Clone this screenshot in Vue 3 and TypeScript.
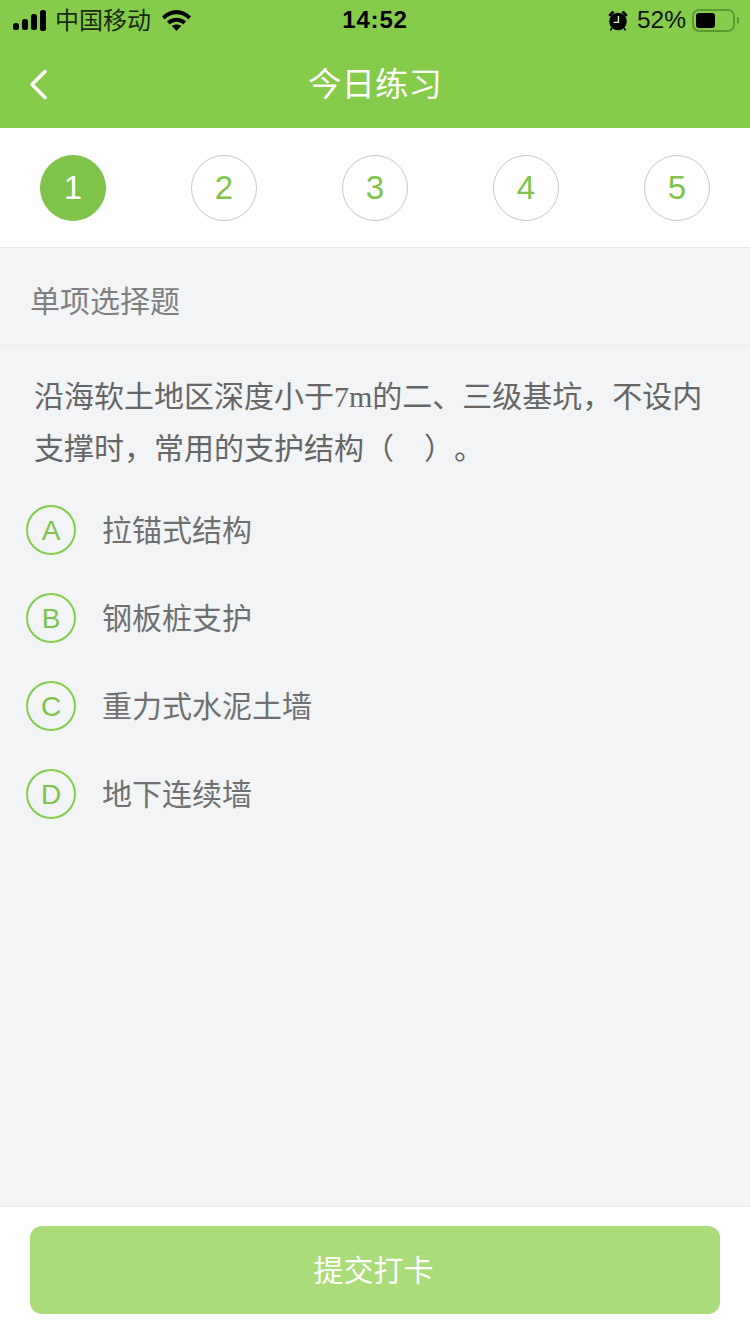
<script setup lang="ts">
const steps: number[] = [1, 2, 3, 4, 5]
const current: number = 1

const options: { key: string; text: string }[] = [
  { key: 'A', text: '拉锚式结构' },
  { key: 'B', text: '钢板桩支护' },
  { key: 'C', text: '重力式水泥土墙' },
  { key: 'D', text: '地下连续墙' },
]
</script>

<template>
  <div class="page">
    <header class="top">
      <div class="status">
        <div class="status-left">
          <svg class="signal" width="33" height="21" viewBox="0 0 33 21">
            <rect x="0" y="13" width="6" height="7" rx="2.5" />
            <rect x="9" y="9" width="6" height="11" rx="2.5" />
            <rect x="18" y="4" width="6" height="16" rx="2.5" />
            <rect x="27" y="0" width="6" height="21" rx="2.5" />
          </svg>
          <span class="carrier">中国移动</span>
          <svg class="wifi" width="29" height="21" viewBox="0 0 29 21">
            <path d="M0 6.6C8 -2.2 21 -2.2 29 6.6L26.4 9.4C19.6 2.6 9.4 2.6 2.6 9.4Z" />
            <path d="M5 11.6C10.4 6.6 18.6 6.6 24 11.6L21.2 14.4C17 11 12 11 7.8 14.4Z" />
            <path d="M9.8 16C12.6 14 16.4 14 19.2 16L14.5 21Z" />
          </svg>
        </div>
        <span class="time">14:52</span>
        <div class="status-right">
          <svg class="alarm" width="20" height="21" viewBox="0 0 20 21">
            <circle cx="10" cy="11.5" r="8.8" />
            <path d="M0.4 5L4.2 0.8L6.6 2.6L2 6.8Z" />
            <path d="M19.6 5L15.8 0.8L13.4 2.6L18 6.8Z" />
            <path d="M4 18L2.4 20.4M16 18L17.6 20.4" stroke="#000" stroke-width="1.6" />
            <path d="M10.4 6V12.4H5.6" fill="none" stroke="#dff0cc" stroke-width="1.4" />
          </svg>
          <span class="percent">52%</span>
          <div class="battery"><div class="battery-level"></div></div>
          <div class="battery-tip"></div>
        </div>
      </div>
      <div class="nav">
        <svg class="back" width="20" height="32" viewBox="0 0 20 32">
          <path d="M16 3.5L3 16.5L16 29.5" fill="none" stroke="#fff" stroke-width="3.6" stroke-linecap="round" stroke-linejoin="round" />
        </svg>
        <h1 class="title">今日练习</h1>
      </div>
    </header>

    <div class="steps">
      <div v-for="n in steps" :key="n" class="step" :class="{ active: n === current }">{{ n }}</div>
    </div>

    <main class="content">
      <div class="kind">单项选择题</div>
      <p class="question">沿海软土地区深度小于<span class="latin">7m</span>的二、三级基坑，不设内支撑时，常用的支护结构（<span class="blank"></span>）。</p>
      <ul class="options">
        <li v-for="opt in options" :key="opt.key" class="option">
          <span class="badge">{{ opt.key }}</span>
          <span class="option-text">{{ opt.text }}</span>
        </li>
      </ul>
    </main>

    <footer class="bottom">
      <button class="submit" type="button">提交打卡</button>
    </footer>
  </div>
</template>

<style>
html,
body {
  margin: 0;
  padding: 0;
  background: #f2f4f6;
}
</style>

<style scoped>
.page {
  width: 750px;
  height: 1334px;
  display: flex;
  flex-direction: column;
  overflow: hidden;
  font-family: "Liberation Sans", "Noto Sans CJK SC", sans-serif;
  background: #f2f4f6;
}
.top {
  height: 128px;
  background: #86cc4b;
  flex-shrink: 0;
}
.status {
  height: 40px;
  padding: 0 11px 0 13px;
  display: flex;
  align-items: center;
  justify-content: space-between;
  color: #000;
  position: relative;
}
.status-left,
.status-right {
  display: flex;
  align-items: center;
}
.signal,
.wifi,
.alarm {
  fill: #000;
}
.carrier {
  margin: 0 0 4px 9px;
  font-size: 24px;
  color: #1a2a10;
  font-family: "Noto Sans CJK SC", sans-serif;
}
.wifi {
  margin-left: 11px;
}
.time {
  position: absolute;
  left: 0;
  right: 0;
  text-align: center;
  font-size: 24px;
  font-weight: 700;
  letter-spacing: 0.8px;
}
.percent {
  margin-left: 9px;
  font-size: 24.5px;
  color: #111;
}
.battery {
  width: 43px;
  height: 23px;
  margin-left: 6px;
  padding: 2px;
  box-sizing: border-box;
  border: 2px solid #5a9a2e;
  border-radius: 7px;
}
.battery-level {
  width: 19px;
  height: 100%;
  background: #000;
  border-radius: 3px;
}
.battery-tip {
  width: 2px;
  height: 7px;
  margin-left: 2px;
  background: #5a9a2e;
  border-radius: 0 2px 2px 0;
}
.nav {
  height: 88px;
  display: flex;
  align-items: center;
  justify-content: center;
  position: relative;
}
.back {
  position: absolute;
  left: 29px;
  top: 28px;
}
.title {
  margin: 0 0 5px;
  font-size: 33.5px;
  font-weight: 400;
  color: #fff;
  font-family: "Noto Sans CJK SC", sans-serif;
}
.steps {
  height: 120px;
  padding: 27px 40px 0;
  box-sizing: border-box;
  display: flex;
  justify-content: space-between;
  align-items: flex-start;
  background: #fff;
  border-bottom: 1px solid #e8e9eb;
  flex-shrink: 0;
}
.step {
  width: 66px;
  height: 66px;
  box-sizing: border-box;
  border: 1px solid #c8c8c8;
  border-radius: 50%;
  display: flex;
  align-items: center;
  justify-content: center;
  font-size: 33px;
  color: #7ec44a;
}
.step.active {
  background: #7ec44a;
  border-color: #7ec44a;
  color: #fff;
}
.content {
  flex: 1;
  min-height: 0;
}
.kind {
  height: 98px;
  box-sizing: border-box;
  padding: 5px 0 0 30px;
  display: flex;
  align-items: center;
  font-size: 30px;
  color: #808080;
  border-bottom: 1px solid #ebedef;
  font-family: "Noto Sans CJK SC", sans-serif;
}
.question {
  margin: 22px 0 0;
  padding: 0 34px;
  font-size: 30px;
  line-height: 52px;
  color: #666;
  font-family: "Noto Sans CJK SC", sans-serif;
  text-spacing-trim: space-all;
}
.latin {
  font-family: "Liberation Serif", serif;
  line-height: 1;
}
.blank {
  display: inline-block;
  width: 30px;
}
.options {
  margin: 33px 0 0;
  padding: 0 0 0 26px;
  list-style: none;
}
.option {
  height: 50px;
  margin-bottom: 38px;
  display: flex;
  align-items: center;
}
.badge {
  width: 50px;
  height: 50px;
  box-sizing: border-box;
  padding-top: 2px;
  border: 2px solid #86cc4b;
  border-radius: 50%;
  display: flex;
  align-items: center;
  justify-content: center;
  font-size: 28px;
  color: #7ec44a;
}
.option-text {
  margin: 0 0 4px 26px;
  font-size: 30px;
  color: #707070;
  font-family: "Noto Sans CJK SC", sans-serif;
}
.bottom {
  height: 128px;
  box-sizing: border-box;
  padding: 19px 30px 0;
  background: #fff;
  border-top: 1px solid #e6e7e9;
  flex-shrink: 0;
}
.submit {
  display: block;
  width: 100%;
  height: 88px;
  padding: 0 3px 4px 0;
  border: 0;
  border-radius: 12px;
  background: #aadc7a;
  color: #fff;
  font-size: 30px;
  font-family: "Noto Sans CJK SC", sans-serif;
}
</style>
